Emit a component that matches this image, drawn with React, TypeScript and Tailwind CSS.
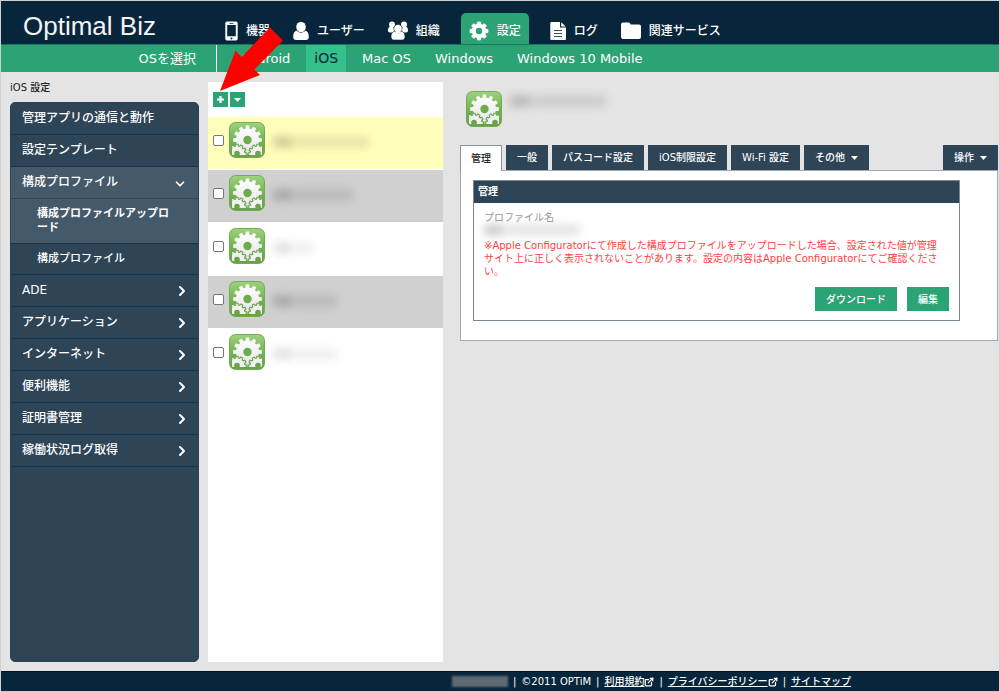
import { ReactNode } from 'react';
import { ChevronDown, ChevronRight, ExternalLink } from 'lucide-react';

// outline of a cog, built from the number of teeth and two radii
function cogPath(cx: number, cy: number, teeth: number, outer: number, inner: number) {
  const step = (Math.PI * 2) / teeth;
  const points: string[] = [];
  for (let i = 0; i < teeth; i++) {
    const a = i * step - Math.PI / 2;
    const corners = [
      [-0.34, inner],
      [-0.22, outer],
      [0.22, outer],
      [0.34, inner],
    ];
    corners.forEach(([offset, r]) => {
      const t = a + offset * step;
      points.push(`${(cx + r * Math.cos(t)).toFixed(2)} ${(cy + r * Math.sin(t)).toFixed(2)}`);
    });
  }
  return `M${points.join('L')}Z`;
}

function ProfileIcon({ id }: { id: string }) {
  return (
    <svg width="36" height="36" viewBox="0 0 36 36" className="shrink-0" aria-hidden="true">
      <defs>
        <linearGradient id={`${id}-bg`} x1="0" y1="0" x2="0" y2="1">
          <stop offset="0" stopColor="#9ed27f" />
          <stop offset="0.5" stopColor="#74b352" />
          <stop offset="1" stopColor="#6a9f4d" />
        </linearGradient>
        <linearGradient id={`${id}-fg`} x1="0" y1="0" x2="0" y2="1">
          <stop offset="0" stopColor="#ffffff" />
          <stop offset="1" stopColor="#e6e6e6" />
        </linearGradient>
        <clipPath id={`${id}-clip`}>
          <rect x="3" y="3" width="30" height="30" rx="1" />
        </clipPath>
      </defs>
      <rect x="0.5" y="0.5" width="35" height="35" rx="6" fill={`url(#${id}-bg)`} stroke="#6fae50" />
      <g clipPath={`url(#${id}-clip)`}>
        <path d={cogPath(18.5, 18, 12, 14.5, 11.5)} fill={`url(#${id}-fg)`} />
        <circle cx="18.5" cy="18" r="4.2" fill="#6dab4c" />
        <path d={cogPath(8, 32, 12, 9.8, 8)} fill="#f0f0f0" stroke="#6aa34b" strokeWidth="1.1" />
        <path d={cogPath(29, 32, 12, 9.8, 8)} fill="#f0f0f0" stroke="#6aa34b" strokeWidth="1.1" />
        <circle cx="8" cy="31.500" r="2.800" fill="#6aa34b" />
        <circle cx="29" cy="31.500" r="2.800" fill="#6aa34b" />
      </g>
    </svg>
  );
}

const PhoneIcon = () => (
  <svg width="13" height="20" viewBox="0 0 13 20" aria-hidden="true">
    <path
      fillRule="evenodd"
      fill="#fff"
      d="M2 0.5h9a1.7 1.7 0 0 1 1.7 1.7v15.6a1.7 1.7 0 0 1-1.7 1.7H2a1.7 1.7 0 0 1-1.7-1.7V2.2A1.7 1.7 0 0 1 2 .5zM2.2 4v11.2h8.6V4zM4.5 2v.8h4V2zM6.5 16.4a1 1 0 1 0 0 2 1 1 0 0 0 0-2z"
    />
  </svg>
);

const UserIcon = () => (
  <svg width="16" height="20" viewBox="0 0 16 20" aria-hidden="true" fill="#fff">
    <ellipse cx="8" cy="6" rx="4.8" ry="5.3" />
    <path d="M3.5 9.5C1.2 10.5.2 12.4.2 16c0 2 1 3 3 3h9.6c2 0 3-1 3-3 0-3.600-1-5.500-3.300-6.500-1.200 1.400-2.600 2.200-4.500 2.200s-3.300-.800-4.500-2.200z" />
  </svg>
);

const GroupIcon = () => (
  <svg width="20" height="20" viewBox="0 0 20 20" aria-hidden="true" fill="#fff">
    <circle cx="4" cy="3.500" r="3" />
    <circle cx="16" cy="3.500" r="3" />
    <path d="M1.500 6C.3 6.500 0 8 0 9.500 0 10.700.7 11.500 2 11.500h4L7 7.500 4 5.500zM18.500 6c1.200.5 1.500 2 1.500 3.500 0 1.200-.7 2-2 2h-4l-1-4 3-2z" />
    <g stroke="#08263b" strokeWidth="0.6">
      <path d="M6.500 10.200c-2.300.8-3.500 2.500-3.500 5.300 0 2.300 1 3.500 3 3.500h8c2 0 3-1.200 3-3.500 0-2.800-1.200-4.500-3.500-5.300z" />
      <circle cx="10" cy="7.700" r="4.200" />
    </g>
    <path d="M7.500 10.500h5v2h-5z" />
  </svg>
);

const SettingIcon = () => (
  <svg width="20" height="20" viewBox="0 0 20 20" aria-hidden="true">
    <path
      fill="#fff"
      stroke="#fff"
      strokeLinejoin="round"
      d={cogPath(10, 10, 8, 9, 6.8)}
    />
    <circle cx="10" cy="10" r="3.200" fill="#2ca374" />
  </svg>
);

const FileIcon = () => (
  <svg width="16" height="20" viewBox="0 0 16 20" aria-hidden="true">
    <path fill="#fff" d="M1.500 1H10v5.500h6V18a1 1 0 0 1-1 1H1.500a1.200 1.200 0 0 1-1.200-1.200V2.200A1.200 1.200 0 0 1 1.500 1zM11.200 1.200l4.500 4.200h-4.500z" />
    <path stroke="#3b5262" d="M4 9.500h8M4 12.500h8M4 15.500h8" />
  </svg>
);

const FolderIcon = () => (
  <svg width="20" height="20" viewBox="0 0 20 20" aria-hidden="true">
    <path fill="#fff" d="M2 1.500h5.500a2 2 0 0 1 2 2h8.500a2 2 0 0 1 2 2V16a2 2 0 0 1-2 2H2a2 2 0 0 1-2-2V3.500a2 2 0 0 1 2-2z" />
  </svg>
);

const Caret = () => (
  <svg width="7" height="4" viewBox="0 0 7 4" aria-hidden="true">
    <path d="M0 0h7L3.500 4z" fill="#fff" />
  </svg>
);

// masked name
function Masked({ className }: { className: string }) {
  return (
    <span className={`flex h-3 gap-0.5 blur-[4px] ${className}`}>
      <span className="w-5 bg-black/18" />
      <span className="flex-1 bg-black/10" />
    </span>
  );
}

const mainNav: { label: string; icon: ReactNode; active?: boolean }[] = [
  { label: '機器', icon: <PhoneIcon /> },
  { label: 'ユーザー', icon: <UserIcon /> },
  { label: '組織', icon: <GroupIcon /> },
  { label: '設定', icon: <SettingIcon />, active: true },
  { label: 'ログ', icon: <FileIcon /> },
  { label: '関連サービス', icon: <FolderIcon /> },
];

const osNav = ['Android', 'iOS', 'Mac OS', 'Windows', 'Windows 10 Mobile'];

const sideTop = ['管理アプリの通信と動作', '設定テンプレート'];
const sideBottom = ['ADE', 'アプリケーション', 'インターネット', '便利機能', '証明書管理', '稼働状況ログ取得'];

const profiles = [
  { row: 'bg-[#ffffbb]', mask: 'w-24' },
  { row: 'bg-[#d0d0d0]', mask: 'w-20' },
  { row: 'bg-white', mask: 'w-10 opacity-60' },
  { row: 'bg-[#d0d0d0]', mask: 'w-16' },
  { row: 'bg-white', mask: 'w-16 opacity-60' },
];

const tabs = ['一般', 'パスコード設定', 'iOS制限設定', 'Wi-Fi 設定'];

function Header() {
  return (
    <header>
      <div className="flex h-[43px] items-end bg-[#08263b] text-white">
        <div className="w-[216px] pl-[22px] font-['Liberation_Sans',sans-serif] text-[26px] leading-9 text-gray-100">
          Optimal Biz
        </div>
        <nav className="flex gap-[7px]">
          {mainNav.map((item) => (
            <a
              key={item.label}
              href="#"
              className={`flex h-[31px] items-center gap-2 px-2 pt-1 text-[12px] font-medium whitespace-nowrap ${
                item.active ? 'mx-1.5 rounded-t-[5px] bg-[#2ca374]' : ''
              }`}
            >
              {item.icon}
              {item.label}
            </a>
          ))}
        </nav>
      </div>
      <div className="flex h-7 border-t border-[#1c7060] bg-[#2ca374] text-[13px] text-white">
        <div className="flex w-[216px] items-center justify-end border-r border-white pr-5">OSを選択</div>
        <nav className="flex gap-2 pl-[15px]">
          {osNav.map((os) => (
            <a
              key={os}
              href="#"
              className={`flex items-center px-2 whitespace-nowrap ${
                os === 'iOS' ? 'bg-[#33c08b] text-[14px] text-[#08263b]' : ''
              }`}
            >
              {os}
            </a>
          ))}
        </nav>
      </div>
    </header>
  );
}

function Sidebar() {
  return (
    <aside className="flex w-[189px] shrink-0 flex-col">
      <h2 className="pt-2 pb-1.5 text-[10px] leading-4 font-medium text-[#222]">iOS 設定</h2>
      <nav className="flex-1 overflow-hidden rounded-[5px] border border-[#2a4257] bg-[#2e4558] text-[12px] font-medium text-white">
        {sideTop.map((label) => (
          <a key={label} href="#" className="flex h-8 items-center border-b border-[#1b3348] px-[11px] pb-0.5">
            {label}
          </a>
        ))}
        <div className="bg-[#445a6a]">
          <a href="#" className="flex h-8 items-center justify-between border-b border-[#2f4659] px-[11px] pb-0.5">
            構成プロファイル
            <ChevronDown size={14} strokeWidth={3} className="mt-1" />
          </a>
          <a
            href="#"
            className="flex h-[45px] items-center border-b border-[#1b3348] pr-5 pl-[26px] text-[11px] leading-[14px] font-bold"
          >
            構成プロファイルアップロード
          </a>
        </div>
        <a href="#" className="flex h-[31px] items-center border-b border-[#1b3348] pl-[26px] text-[11px]">
          構成プロファイル
        </a>
        {sideBottom.map((label) => (
          <a key={label} href="#" className="flex h-8 items-center justify-between border-b border-[#1b3348] pr-2 pb-0.5 pl-[11px]">
            {label}
            <ChevronRight size={16} strokeWidth={3} className="mt-0.5" />
          </a>
        ))}
      </nav>
    </aside>
  );
}

function ProfileList() {
  return (
    <section className="relative mt-2.5 w-[235px] shrink-0 bg-white">
      <div className="flex h-[35px] gap-0.5 pt-2.5 pl-[5px]">
        <button aria-label="追加" className="flex size-[15px] items-center justify-center bg-[#2ca374]">
          <svg width="9" height="9" viewBox="0 0 9 9" aria-hidden="true">
            <path d="M4.500 1v7M1 4.500h7" stroke="#fff" strokeWidth="2.200" />
          </svg>
        </button>
        <button aria-label="メニュー" className="flex size-[15px] items-center justify-center bg-[#2ca374]">
          <Caret />
        </button>
      </div>
      <ul className="flex flex-col gap-px">
        {profiles.map((p, i) => (
          <li key={i} className={`flex h-[52px] items-center pb-1.5 pl-[5px] ${p.row}`}>
            <input
              type="checkbox"
              aria-label={`プロファイル ${i + 1}`}
              className="mr-[5px] size-[11px] shrink-0 appearance-none rounded-xs border border-[#767676] bg-white"
            />
            <ProfileIcon id={`profile-${i}`} />
            <Masked className={`mt-1 ml-2 ${p.mask}`} />
          </li>
        ))}
      </ul>
      {/* arrow that points at the add button */}
      <svg
        width="64"
        height="65"
        viewBox="0 0 64 65"
        className="pointer-events-none absolute -top-[55px] left-3"
        aria-hidden="true"
      >
        <path d="M0 64 15.500 23.500 21.500 30 50 .5 63 13.500 34.500 42.500 40 48z" fill="#fe0000" />
      </svg>
    </section>
  );
}

function Detail() {
  return (
    <section className="ml-[17px] min-w-0 flex-1 pt-[19px]">
      <div className="flex pl-1.5">
        <ProfileIcon id="detail" />
        <Masked className="mt-1 ml-2 w-24" />
      </div>

      <div className="mt-[18px] flex gap-1 text-[10px] font-medium whitespace-nowrap text-white">
        <button className="z-10 -mb-px h-[26px] border border-b-0 border-[#8b949c] bg-white px-[10px] text-[#222]">管理</button>
        {tabs.map((tab) => (
          <button key={tab} className="h-[25px] bg-[#2e4558] px-[11px]">
            {tab}
          </button>
        ))}
        <button className="flex h-[25px] items-center gap-1.5 bg-[#2e4558] px-[11px]">
          その他 <Caret />
        </button>
        <button className="ml-auto flex h-[25px] items-center gap-1.5 bg-[#2e4558] px-[11px]">
          操作 <Caret />
        </button>
      </div>

      <div className="border border-[#a3a9ae] bg-white px-3 pt-[9px] pb-[19px]">
        <div className="max-w-[487px] border border-[#7d8790] text-[10px] leading-[13px]">
          <h3 className="flex h-[22px] items-center bg-[#2e4558] px-1 pb-0.5 font-bold text-white">管理</h3>
          <div className="px-[10px] pt-2 pb-[9px]">
            <div className="text-[#999]">プロファイル名</div>
            <Masked className="mb-[3px] w-24" />
            <p className="max-w-[460px] text-[#ff4040]">
              ※Apple Configuratorにて作成した構成プロファイルをアップロードした場合、設定された値が管理サイト上に正しく表示されないことがあります。設定の内容はApple Configuratorにてご確認ください。
            </p>
            <div className="mt-[9px] flex justify-end gap-[10px] font-medium text-white">
              <button className="h-6 bg-[#2ca374] px-[11px]">ダウンロード</button>
              <button className="h-6 bg-[#2ca374] px-[11px]">編集</button>
            </div>
          </div>
        </div>
      </div>
    </section>
  );
}

function Footer() {
  return (
    <footer className="flex h-5 items-center justify-end gap-[5px] border-t border-[#001028] bg-[#08263b] pr-[148px] text-[10px] font-medium whitespace-nowrap text-white">
      <span className="h-[11px] w-14 bg-[#5f6a73] blur-[1px]" />
      <span>|</span>
      <span>©2011 OPTiM</span>
      <span>|</span>
      <a href="#" className="flex items-center underline">
        利用規約
        <ExternalLink size={10} strokeWidth={3} />
      </a>
      <span>|</span>
      <a href="#" className="flex items-center underline">
        プライバシーポリシー
        <ExternalLink size={10} strokeWidth={3} />
      </a>
      <span>|</span>
      <a href="#" className="underline">
        サイトマップ
      </a>
    </footer>
  );
}

export default function App() {
  return (
    <div
      lang="ja"
      className="flex min-h-screen flex-col border border-[#cdd1d1] bg-[#e4e4e4] font-['DejaVu_Sans','Noto_Sans_CJK_JP',sans-serif]"
    >
      <Header />
      <main className="flex flex-1 pr-px pb-[9px] pl-[9px]">
        <Sidebar />
        <div className="ml-[9px] flex flex-1">
          <ProfileList />
          <Detail />
        </div>
      </main>
      <Footer />
    </div>
  );
}
